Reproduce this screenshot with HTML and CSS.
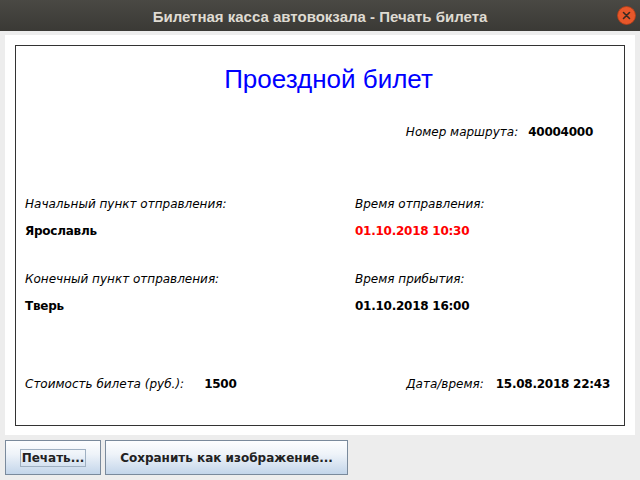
FILE: index.html
```html
<!DOCTYPE html>
<html lang="ru">
<head>
<meta charset="utf-8">
<title>Печать билета</title>
<link rel="stylesheet" href="styles.css">
</head>
<body>
<div class="window">
  <div class="titlebar">
    <span class="title">Билетная касса автовокзала - Печать билета</span>
    <span class="close"><svg width="19" height="19" viewBox="0 0 19 19"><circle cx="9.5" cy="9.5" r="9" fill="#e8572a" stroke="#b93f17" stroke-width="0.8"/><path d="M6.5 6.5 L12.5 12.5 M12.5 6.5 L6.5 12.5" stroke="#3a2a22" stroke-width="1.6" stroke-linecap="round"/></svg></span>
  </div>
  <div class="content">
    <div class="sheet">
      <div class="ticket">
        <div class="heading">Проездной билет</div>
        <div class="route"><span class="lbl">Номер маршрута:</span><span class="val route-val">40004000</span></div>
        <div class="cols">
          <div class="col">
            <div class="lbl">Начальный пункт отправления:</div>
            <div class="val gap-v">Ярославль</div>
            <div class="lbl gap-l">Конечный пункт отправления:</div>
            <div class="val gap-v">Тверь</div>
          </div>
          <div class="col col-right">
            <div class="lbl">Время отправления:</div>
            <div class="val gap-v red">01.10.2018 10:30</div>
            <div class="lbl gap-l">Время прибытия:</div>
            <div class="val gap-v">01.10.2018 16:00</div>
          </div>
        </div>
        <div class="footer">
          <div class="pair"><span class="lbl">Стоимость билета (руб.):</span><span class="val price">1500</span></div>
          <div class="pair"><span class="lbl">Дата/время:</span><span class="val stamp">15.08.2018 22:43</span></div>
        </div>
      </div>
    </div>
    <div class="buttons">
      <button class="btn btn-print"><span class="focus">Печать...</span></button>
      <button class="btn btn-save">Сохранить как изображение...</button>
    </div>
  </div>
</div>
</body>
</html>
```
FILE: styles.css
```css
* { box-sizing: border-box; }
html, body { margin: 0; padding: 0; }
body {
  width: 640px;
  height: 480px;
  background: #ededed;
  font-family: "DejaVu Sans", sans-serif;
  overflow: hidden;
}
.titlebar {
  height: 31px;
  background: linear-gradient(#4a4944, #3a3935);
  display: flex;
  align-items: center;
  justify-content: center;
  position: relative;
}
.title {
  color: #dfdbd2;
  font-family: "Liberation Sans", sans-serif;
  font-weight: bold;
  font-size: 15px;
  margin-top: 1px;
}
.close {
  position: absolute;
  right: 4px;
  top: 6px;
  width: 19px;
  height: 19px;
}
.close svg { display: block; }
.content {
  padding: 4px 5px 0 5px;
}
.sheet {
  background: #fff;
  height: 400px;
  padding: 10px;
}
.ticket {
  border: 1px solid #333;
  height: 381px;
  padding: 17px 14px 0 9px;
}
.heading {
  color: #0000ff;
  font-family: "Liberation Sans", sans-serif;
  font-size: 26px;
  line-height: 32px;
  text-align: center;
  padding-left: 22px;
}
.lbl {
  font-style: italic;
  font-size: 12px;
  line-height: 16px;
  color: #000;
}
.val {
  font-weight: bold;
  font-size: 12px;
  line-height: 16px;
  color: #000;
  letter-spacing: -0.25px;
}
.route {
  margin-top: 29px;
  display: flex;
  justify-content: flex-end;
  padding-right: 17px;
}
.route-val { margin-left: 10px; }
.cols {
  margin-top: 56px;
  display: flex;
}
.col { width: 330px; }
.col-right { width: auto; }
.gap-v { margin-top: 11px; }
.gap-l { margin-top: 32px; }
.red { color: #ff0000; }
.footer {
  margin-top: 59px;
  display: flex;
  justify-content: space-between;
}
.price { margin-left: 20px; }
.stamp { margin-left: 12px; }
.buttons {
  margin-top: 5px;
  display: flex;
  gap: 4px;
}
.btn {
  height: 35px;
  border: 1px solid #7a8a9c;
  background: linear-gradient(#fdfeff, #eef3f9 40%, #c3d5ea);
  font-family: "DejaVu Sans", sans-serif;
  font-weight: bold;
  font-size: 12px;
  color: #222;
  padding: 0;
  display: flex;
  align-items: center;
  justify-content: center;
}
.btn-print { width: 96px; }
.btn-save { width: 243px; }
.focus {
  border: 1px solid #9fb0c2;
  padding: 1px 1px;
}
```
